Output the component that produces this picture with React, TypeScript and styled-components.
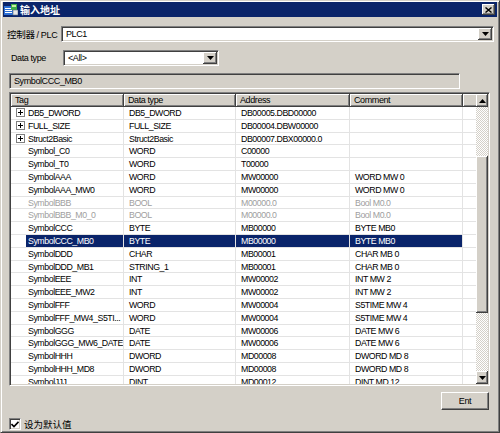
import styled, { createGlobalStyle } from "styled-components";

const GlobalStyle = createGlobalStyle`
  html, body { margin: 0; padding: 0; background: #d4d0c8; }
  body {
    font-family: "Liberation Sans", Arial, "Noto Sans CJK SC", sans-serif;
    font-size: 9px;
    letter-spacing: -0.4px;
    color: #000;
  }
  * { box-sizing: border-box; }
`;

const CJK = `"Noto Sans CJK SC", "Liberation Sans", sans-serif`;

const Window = styled.div`
  width: 500px;
  height: 433px;
  background: #d4d0c8;
  border: 1px solid;
  border-color: #d4d0c8 #404040 #404040 #d4d0c8;
  box-shadow: inset 1px 1px #fff, inset -1px -1px #808080;
  padding: 1px 2px;
  display: flex;
  flex-direction: column;
`;

const TitleBar = styled.div`
  height: 15px;
  background: #0a246a;
  display: flex;
  align-items: center;
  padding: 0 2px 0 1px;
  gap: 2px;
`;

const TitleText = styled.span`
  font-family: ${CJK};
  font-weight: bold;
  font-size: 10px;
  letter-spacing: 0;
  color: #fff;
`;

const CloseButton = styled.div`
  margin-left: auto;
  width: 13px;
  height: 11px;
  background: #d4d0c8;
  box-shadow: inset -1px -1px #404040, inset 1px 1px #fff, inset -2px -2px #808080;
  display: flex;
  align-items: center;
  justify-content: center;
`;

const Content = styled.div`
  flex: 1;
  display: flex;
  flex-direction: column;
  padding: 0 3px 0 4px;
`;

const FieldRow = styled.div<{ $top: number; $indent?: number }>`
  display: flex;
  align-items: center;
  margin-top: ${(p) => p.$top}px;
  padding-left: ${(p) => p.$indent ?? 0}px;
`;

const Label = styled.span<{ $width: number; $cjk?: boolean }>`
  width: ${(p) => p.$width}px;
  white-space: nowrap;
  font-size: ${(p) => (p.$cjk ? "9.5px" : "9px")};
  ${(p) => (p.$cjk ? `font-family: ${CJK}; letter-spacing: -0.3px;` : "")}
`;

const Latin = styled.span`
  font-family: "Liberation Sans", Arial, sans-serif;
  font-size: 9px;
`;

const Sunken = styled.div`
  border: 1px solid;
  border-color: #808080 #fff #fff #808080;
  box-shadow: inset 1px 1px #404040, inset -1px -1px #d4d0c8;
`;

const Combo = styled(Sunken)<{ $width?: number }>`
  height: 16px;
  background: #fff;
  display: flex;
  align-items: center;
  padding: 1px;
  ${(p) => (p.$width ? `width: ${p.$width}px;` : "flex: 1;")}
`;

const ComboText = styled.span`
  flex: 1;
  padding-left: 3px;
  line-height: 12px;
`;

const Raised = styled.div`
  background: #d4d0c8;
  box-shadow: inset -1px -1px #404040, inset 1px 1px #fff, inset -2px -2px #808080, inset 2px 2px #d4d0c8;
`;

const ArrowButton = styled(Raised)<{ $w?: number; $h?: number }>`
  width: ${(p) => p.$w ?? 14}px;
  height: ${(p) => p.$h ?? 12}px;
  flex: none;
  display: flex;
  align-items: center;
  justify-content: center;
`;

const ReadOnly = styled(Sunken)`
  margin: 7px 0 0 2px;
  width: 451px;
  height: 16px;
  background: #d4d0c8;
  padding-left: 4px;
  line-height: 14px;
`;

const ListView = styled(Sunken)`
  margin: 3px 4px 0 2px;
  height: 294px;
  background: #fff;
  padding: 1px;
  display: flex;
  overflow: hidden;
`;

const Columns = styled.div`
  flex: 1;
  overflow: hidden;
  display: flex;
  flex-direction: column;
`;

const GRID = "113px 112px 114px 113px 15px";

const HeaderRow = styled.div`
  display: grid;
  grid-template-columns: ${GRID};
  height: 13px;
  flex: none;
`;

const HeaderCell = styled(Raised)`
  padding-left: 4px;
  line-height: 12px;
  white-space: nowrap;
`;

const Row = styled.div<{ $muted?: boolean }>`
  display: grid;
  grid-template-columns: ${GRID};
  height: 12.8px;
  flex: none;
  font-size: 8.8px;
  letter-spacing: -0.45px;
  border-bottom: 1px solid #e3e3e3;
  color: ${(p) => (p.$muted ? "#a0a0a0" : "#000")};
`;

const Cell = styled.div<{ $selected?: boolean }>`
  border-right: 1px solid #e3e3e3;
  padding-left: 5px;
  line-height: 12px;
  white-space: nowrap;
  overflow: hidden;
  background: ${(p) => (p.$selected ? "#0a246a" : "transparent")};
  color: ${(p) => (p.$selected ? "#fff" : "inherit")};
`;

const TagCell = styled.div`
  border-right: 1px solid #e3e3e3;
  display: flex;
  align-items: stretch;
  overflow: hidden;
`;

const ExpanderSlot = styled.div`
  width: 15px;
  flex: none;
  display: flex;
  align-items: center;
  padding-left: 5px;
`;

const Expander = styled.div`
  width: 9px;
  height: 9px;
  border: 1px solid #808080;
  background: #fff;
  position: relative;
  &::before, &::after {
    content: "";
    position: absolute;
    background: #000;
  }
  &::before { left: 1px; top: 3px; width: 5px; height: 1px; }
  &::after { left: 3px; top: 1px; width: 1px; height: 5px; }
`;

const TagText = styled.span<{ $selected?: boolean }>`
  flex: 1;
  padding-left: 2px;
  line-height: 12px;
  white-space: nowrap;
  overflow: hidden;
  background: ${(p) => (p.$selected ? "#0a246a" : "transparent")};
  color: ${(p) => (p.$selected ? "#fff" : "inherit")};
`;

const ScrollBar = styled.div`
  width: 12px;
  flex: none;
  display: flex;
  flex-direction: column;
`;

const Track = styled.div`
  flex: 1;
  position: relative;
  background: repeating-conic-gradient(#d4d0c8 0 25%, #fff 0 50%) 0 0 / 2px 2px;
`;

const Thumb = styled(Raised)`
  position: absolute;
  left: 0;
  right: 0;
`;

const ButtonRow = styled.div`
  display: flex;
  justify-content: flex-end;
  margin-top: 6px;
  padding-right: 5px;
`;

const PushButton = styled.div`
  width: 48px;
  height: 18px;
  background: #d4d0c8;
  border: 1px solid;
  border-color: #fff #404040 #404040 #fff;
  box-shadow: inset -1px -1px #808080;
  display: flex;
  align-items: center;
  justify-content: center;
`;

const CheckRow = styled.label`
  display: flex;
  align-items: center;
  gap: 3px;
  margin-top: 7px;
  padding-left: 2px;
`;

const CheckBox = styled(Sunken)`
  width: 12px;
  height: 12px;
  background: #fff;
  display: flex;
  align-items: center;
  justify-content: center;
`;

const CheckText = styled.span`
  font-family: ${CJK};
  font-size: 9.5px;
  letter-spacing: 0;
`;

type Item = {
  tag: string;
  type: string;
  addr: string;
  comment?: string;
  tree?: boolean;
  muted?: boolean;
  selected?: boolean;
};

const items: Item[] = [
  { tag: "DB5_DWORD", type: "DB5_DWORD", addr: "DB00005.DBD00000", tree: true },
  { tag: "FULL_SIZE", type: "FULL_SIZE", addr: "DB00004.DBW00000", tree: true },
  { tag: "Struct2Basic", type: "Struct2Basic", addr: "DB00007.DBX00000.0", tree: true },
  { tag: "Symbol_C0", type: "WORD", addr: "C00000" },
  { tag: "Symbol_T0", type: "WORD", addr: "T00000" },
  { tag: "SymbolAAA", type: "WORD", addr: "MW00000", comment: "WORD MW 0" },
  { tag: "SymbolAAA_MW0", type: "WORD", addr: "MW00000", comment: "WORD MW 0" },
  { tag: "SymbolBBB", type: "BOOL", addr: "M00000.0", comment: "Bool M0.0", muted: true },
  { tag: "SymbolBBB_M0_0", type: "BOOL", addr: "M00000.0", comment: "Bool M0.0", muted: true },
  { tag: "SymbolCCC", type: "BYTE", addr: "MB00000", comment: "BYTE MB0" },
  { tag: "SymbolCCC_MB0", type: "BYTE", addr: "MB00000", comment: "BYTE MB0", selected: true },
  { tag: "SymbolDDD", type: "CHAR", addr: "MB00001", comment: "CHAR MB 0" },
  { tag: "SymbolDDD_MB1", type: "STRING_1", addr: "MB00001", comment: "CHAR MB 0" },
  { tag: "SymbolEEE", type: "INT", addr: "MW00002", comment: "INT MW 2" },
  { tag: "SymbolEEE_MW2", type: "INT", addr: "MW00002", comment: "INT MW 2" },
  { tag: "SymbolFFF", type: "WORD", addr: "MW00004", comment: "S5TIME MW 4" },
  { tag: "SymbolFFF_MW4_S5TI...", type: "WORD", addr: "MW00004", comment: "S5TIME MW 4" },
  { tag: "SymbolGGG", type: "DATE", addr: "MW00006", comment: "DATE MW 6" },
  { tag: "SymbolGGG_MW6_DATE", type: "DATE", addr: "MW00006", comment: "DATE MW 6" },
  { tag: "SymbolHHH", type: "DWORD", addr: "MD00008", comment: "DWORD MD 8" },
  { tag: "SymbolHHH_MD8", type: "DWORD", addr: "MD00008", comment: "DWORD MD 8" },
  { tag: "SymbolJJJ", type: "DINT", addr: "MD00012", comment: "DINT MD 12" },
];

const Arrow = ({ up }: { up?: boolean }) => (
  <svg width="7" height="4" viewBox="0 0 7 4">
    <polygon points={up ? "3.5,0 7,4 0,4" : "0,0 7,0 3.5,4"} fill="#000" />
  </svg>
);

const TitleIcon = () => (
  <svg width="14" height="12" viewBox="0 0 14 12">
    <rect x="0" y="2" width="9" height="9" fill="#2b6fd6" />
    <rect x="1" y="4" width="7" height="1" fill="#fff" />
    <rect x="1" y="6" width="7" height="1" fill="#fff" />
    <rect x="1" y="8" width="7" height="1" fill="#fff" />
    <rect x="7" y="0" width="6" height="6" fill="#3fae4a" />
    <rect x="8" y="1" width="4" height="2" fill="#c8f0a0" />
    <rect x="9" y="6" width="5" height="5" fill="#e8e8e8" stroke="#607080" strokeWidth="0.6" />
  </svg>
);

export default function App() {
  return (
    <>
      <GlobalStyle />
      <Window>
        <TitleBar>
          <TitleIcon />
          <TitleText>输入地址</TitleText>
          <CloseButton>
            <svg width="7" height="6" viewBox="0 0 7 6">
              <path d="M0.5 0.5 L6.5 5.5 M6.5 0.5 L0.5 5.5" stroke="#000" strokeWidth="1.4" />
            </svg>
          </CloseButton>
        </TitleBar>
        <Content>
          <FieldRow $top={9}>
            <Label $width={54} $cjk>
              控制器 <Latin>/ PLC</Latin>
            </Label>
            <Combo>
              <ComboText>PLC1</ComboText>
              <ArrowButton>
                <Arrow />
              </ArrowButton>
            </Combo>
          </FieldRow>
          <FieldRow $top={8} $indent={4}>
            <Label $width={52}>Data type</Label>
            <Combo $width={156}>
              <ComboText>&lt;All&gt;</ComboText>
              <ArrowButton>
                <Arrow />
              </ArrowButton>
            </Combo>
          </FieldRow>
          <ReadOnly>SymbolCCC_MB0</ReadOnly>
          <ListView>
            <Columns>
              <HeaderRow>
                <HeaderCell>Tag</HeaderCell>
                <HeaderCell>Data type</HeaderCell>
                <HeaderCell>Address</HeaderCell>
                <HeaderCell>Comment</HeaderCell>
                <HeaderCell />
              </HeaderRow>
              {items.map((it) => (
                <Row key={it.tag} $muted={it.muted}>
                  <TagCell>
                    <ExpanderSlot>{it.tree && <Expander />}</ExpanderSlot>
                    <TagText $selected={it.selected}>{it.tag}</TagText>
                  </TagCell>
                  <Cell $selected={it.selected}>{it.type}</Cell>
                  <Cell $selected={it.selected}>{it.addr}</Cell>
                  <Cell $selected={it.selected}>{it.comment}</Cell>
                  <Cell />
                </Row>
              ))}
            </Columns>
            <ScrollBar>
              <ArrowButton $w={12} $h={13}>
                <Arrow up />
              </ArrowButton>
              <Track>
                <Thumb style={{ top: 49, height: 157 }} />
              </Track>
              <ArrowButton $w={12} $h={13}>
                <Arrow />
              </ArrowButton>
            </ScrollBar>
          </ListView>
          <ButtonRow>
            <PushButton>Ent</PushButton>
          </ButtonRow>
          <CheckRow>
            <CheckBox>
              <svg width="8" height="7" viewBox="0 0 8 7">
                <path d="M0.5 3 L3 5.5 L7.5 0.8" stroke="#000" strokeWidth="1.6" fill="none" />
              </svg>
            </CheckBox>
            <CheckText>设为默认值</CheckText>
          </CheckRow>
        </Content>
      </Window>
    </>
  );
}
